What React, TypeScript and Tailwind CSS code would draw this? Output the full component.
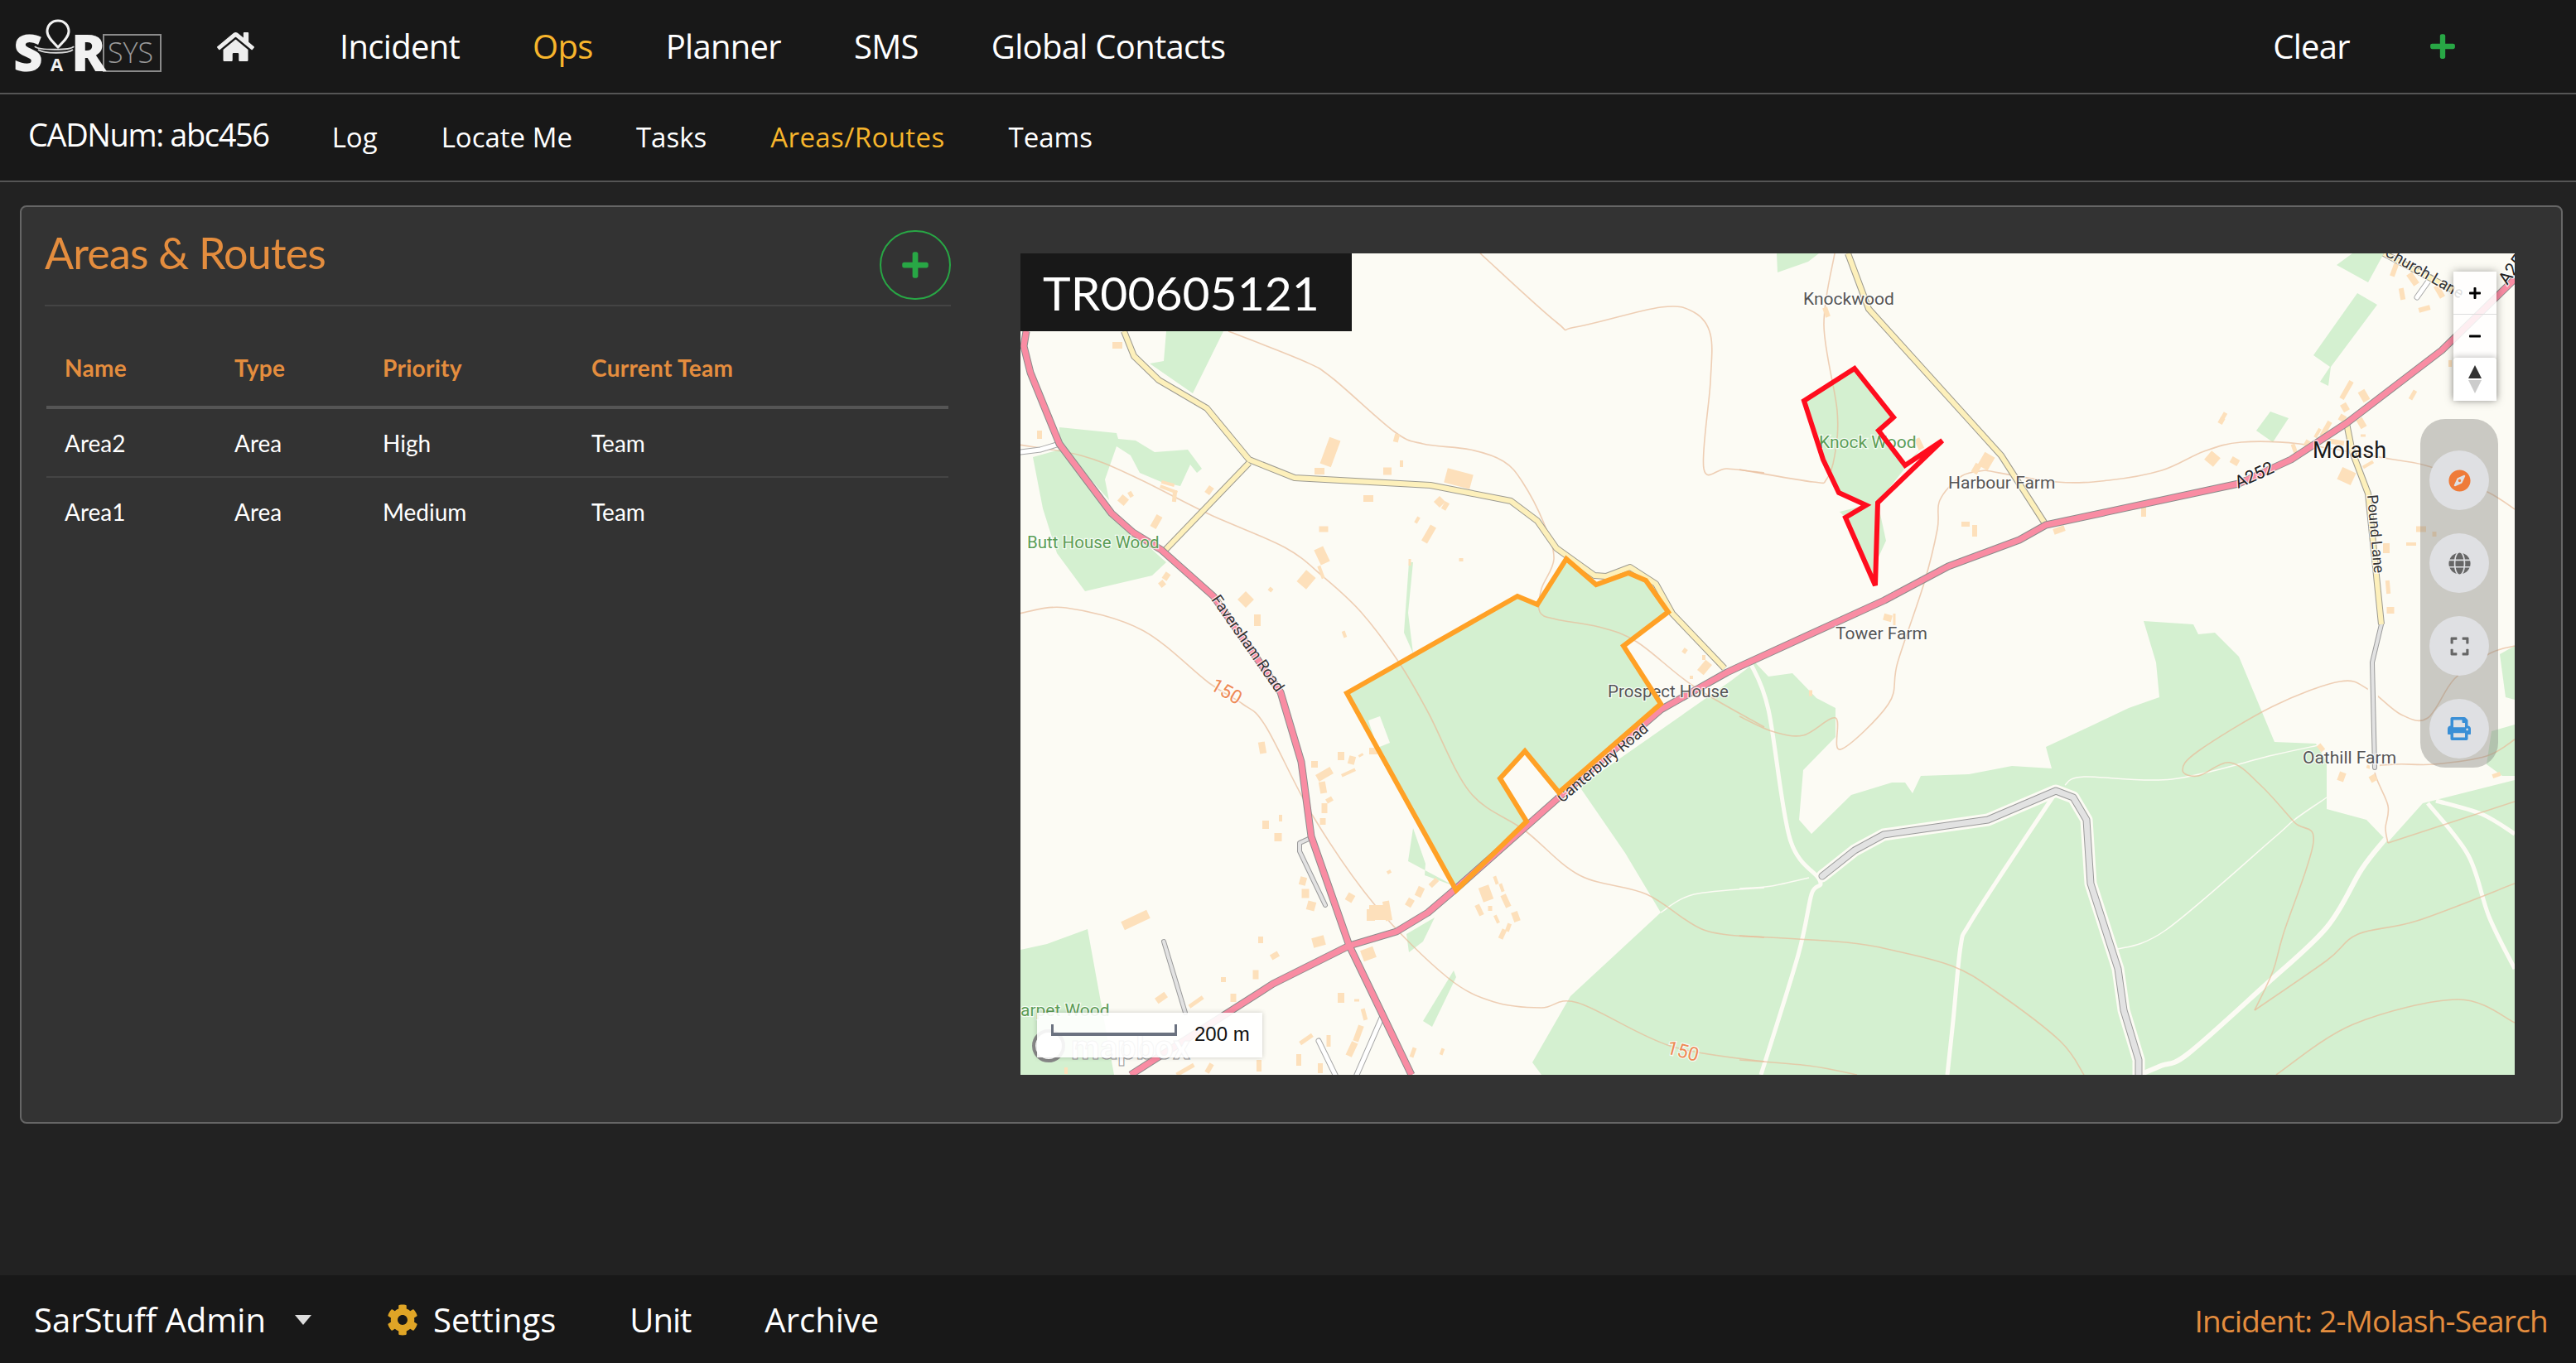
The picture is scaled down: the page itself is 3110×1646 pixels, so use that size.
import { FaCompass, FaCog, FaExpand, FaGlobe, FaHome, FaMinus, FaPlus, FaPrint } from 'react-icons/fa';

type Pt = [number, number];

// map drawing is in page pixels, so the svg viewBox starts where the map starts
const forests: number[][] = [
  [1279,516,1348,523,1350,530,1371,532,1394,546,1434,543,1451,566,1445,571,1437,561,1425,587,1402,582,1376,571,1365,550,1348,539,1334,579,1339,604,1279,536],
  [1247,552,1279,543,1342,620,1408,679,1391,695,1310,714,1276,668,1259,614],
  [1408,400,1477,400,1440,475,1388,439,1405,436],
  [2145,306,2196,306,2183,316,2146,329],
  [2840,306,2878,306,2859,341,2821,320],
  [2846,354,2870,368,2814,443,2811,466,2801,461,2813,443,2793,429],
  [2741,497,2763,505,2744,534,2724,520],
  [2119,800,2135,817,2164,813,2193,843,2216,855,2216,890,2177,930,2172,990,2187,1007,2235,960,2284,945,2300,945,2309,958,2319,937,2377,935,2429,925,2477,928,2470,902,2528,875,2570,855,2607,842,2603,800,2588,750,2648,754,2654,766,2674,764,2703,793,2746,896,2796,898,2809,920,2809,977,2857,990,2883,1017,2925,970,3036,942,3036,1298,1861,1298,1850,1283,1896,1203,2005,1102,1962,1030,1907,950,2090,822],
  [3018,790,3036,780,3036,845,3025,842],
  [3036,875,3008,883,3002,923,3021,937,3036,937],
  [1232,1147,1264,1140,1313,1122,1345,1298,1232,1298],
  [1706,1000,1721,1043,1720,1057,1756,1070,1700,1040],
  [1732,1108,1718,1137,1701,1150,1698,1128],
  [1755,1172,1758,1180,1729,1240,1718,1233],
  [1701,679,1706,679,1700,740,1706,789,1695,764],
  [2239,445,2286,504,2268,520,2300,562,2320,540,2267,607,2277,653,2265,679,2264,707,2228,625,2221,618,2253,610,2220,595,2201,555,2178,484],
];

const orangeArea = [1626,837,1832,720,1856,730,1891,675,1927,706,1966,692,1987,701,2014,739,1960,780,2005,850,1882,957,1841,907,1811,940,1843,992,1758,1075];
const redArea = [2239,445,2286,504,2268,520,2300,562,2345,532,2267,607,2264,707,2228,625,2253,610,2220,595,2201,555,2178,484];

const tracks: [number, number[]][] = [
  [5, [2113,800,2135,857,2161,1013,2197,1063,2187,1080,2171,1153,2126,1298]],
  [5, [2480,960,2422,1047,2377,1117,2367,1143,2358,1233,2351,1298]],
  [6, [2880,1013,2851,1050,2809,1120,2731,1193,2641,1273,2609,1287,2583,1298]],
  [5, [2931,970,2980,1033,3005,1107,3036,1170]],
  [5, [2941,967,2996,983,3036,1007]],
  [1.5, [2493,948,2516,938,2622,941,2744,912,2799,900]],
  [1.5, [2809,963,2770,990,2744,1013,2615,1123,2554,1147]],
  [1.5, [2100,1073,2139,1070,2184,1060]],
  [1.5, [2005,1102,2045,1080,2130,1072]],
];

const contours: number[][] = [
  [1787,306,1879,389,1902,395,2005,371,2045,377,2065,404,2065,461,2057,566,2085,566,2130,571],
  [1483,400,1574,436,1609,457,1683,521,1718,536,1775,543,1815,557,1838,582,1864,632,1876,675,1861,711,1859,739,1879,748,1930,757,1976,775,2045,829,2130,878],
  [1230,537,1305,550,1368,575,1460,621,1551,661,1597,696,1643,739,1689,800,1724,860,1775,957,1841,1003,1907,1057,1988,1080,2057,1123,2130,1132],
  [1230,741,1287,734,1379,761,1460,825,1500,850,1528,877,1586,987,1660,1093,1747,1180,1804,1210,1861,1217,1905,1211,2016,1263,2130,1282],
  [2215,306,2202,393,2218,496,2215,550,2205,579,2189,582,2100,567],
  [2397,568,2368,575,2342,604,2339,639,2323,704,2291,800,2280,850,2222,905,2216,867,2177,888,2139,883,2100,865],
  [2397,568,2483,582,2546,580,2610,568,2661,545,2706,534,2776,536,2884,554,2935,564,3003,594,3036,615],
  [2748,1298,2841,1237,2967,1207,3036,1235],
  [2100,1130,2229,1138,2287,1148,2358,1167,2409,1197,2487,1257,2516,1298],
  [2100,1280,2184,1287,2242,1298],
  [2722,1220,2744,1173,2757,1127,2793,1017,2770,993,2731,950,2693,921,2654,937,2635,930,2654,907,2744,853,2825,823,2860,833,2899,863,2931,867,2963,820,3006,789,3036,780],
  [2722,1220,2809,1160,2847,1128,2918,1112,3036,1067],
  [2883,1018,3036,968],
  [2883,1018,2880,1000,2883,973,2867,930,2893,923,2938,923,3002,913,3036,893],
];

// x, y, w, h, rotation
const buildings: number[][] = [
  [1349,417,12,8,0],[1255,525,6,10,0],[1606,546,14,34,20],[1593,569,12,8,0],[1675,569,10,9,0],[1692,560,4,8,0],
  [1686,529,6,10,15],[1761,578,32,18,15],[1652,602,12,8,0],[1738,606,10,10,45],[1745,611,6,10,30],[1711,628,4,8,30],
  [1725,645,8,22,30],[1598,639,11,7,0],[1596,671,12,20,-25],[1595,691,4,16,-20],[1577,700,15,18,40],[1504,724,14,14,45],
  [1534,712,5,5,40],[1518,749,8,14,0],[1623,766,4,8,-20],[1460,592,7,10,35],[1356,604,10,10,40],[1365,597,5,7,-30],
  [1396,630,8,16,30],[1410,584,16,4,15],[1411,591,22,4,20],[1418,599,5,14,5],[1408,696,7,9,35],[1403,705,7,7,-40],
  [1764,676,5,4,0],[1702,679,3,8,0],[2034,786,5,6,35],[2057,794,4,6,0],[2058,806,10,16,40],[2042,818,4,4,0],
  [1524,903,8,14,-10],[1587,923,8,8,0],[1619,913,8,10,0],[1632,918,8,10,15],[1658,907,10,8,0],[1643,912,6,3,-30],
  [1599,935,20,9,-30],[1628,933,18,4,-25],[1597,951,8,14,-10],[1605,966,8,6,-30],[1599,976,7,12,0],[1597,992,7,8,0],
  [1528,996,8,10,0],[1546,988,4,8,0],[1543,1011,9,10,0],[1573,1064,8,10,15],[1576,1079,9,11,0],[1583,1094,10,11,15],
  [1630,1084,9,10,30],[1677,1053,5,4,-30],[1714,1077,8,12,25],[1731,1066,12,6,-45],[1702,1090,8,10,30],[1663,1102,20,18,0],
  [1655,1105,10,14,0],[1675,1100,8,24,-10],[1371,1111,34,11,-25],[1794,1079,13,18,-20],[1806,1063,4,10,-20],[1813,1072,4,10,-20],
  [1818,1088,7,16,-25],[1786,1099,6,14,-25],[1799,1097,5,6,0],[1807,1110,4,10,-25],[1830,1107,8,12,-20],[1821,1120,5,10,20],
  [1814,1128,6,12,25],[1522,1135,6,8,0],[1592,1137,15,12,-15],[1652,1152,16,14,-20],[1539,1154,10,7,-30],[1516,1177,7,11,0],
  [1477,1183,6,6,0],[1402,1205,14,8,-35],[1444,1210,20,5,-35],[1489,1205,7,10,0],[1619,1205,8,12,0],[1638,1208,6,3,0],
  [1647,1225,5,14,-15],[1640,1248,7,20,20],[1632,1267,8,18,25],[1577,1255,18,5,-35],[1604,1257,5,14,0],[1706,1271,5,12,20],
  [1741,1270,4,8,20],[1568,1280,6,14,0],[1520,1287,6,14,0],[1460,1290,6,12,30],[1431,1292,5,24,60],[1594,1290,6,12,0],[1287,1293,4,8,0],
  [2205,377,6,12,-20],[2317,536,7,14,-25],[2398,557,14,18,30],[2386,566,8,12,30],[2373,633,10,6,0],[2384,641,6,14,0],
  [2486,640,14,7,-20],[2588,618,6,12,0],[2279,746,10,8,15],[2287,748,3,14,0],[2186,837,4,7,0],[2671,554,14,14,40],
  [2698,557,10,8,30],[2685,502,5,8,30],[2682,508,6,8,30],[2770,542,5,12,-20],[2786,536,8,8,30],[2808,518,6,20,30],
  [2798,523,4,12,30],[2833,471,6,24,30],[2854,478,9,14,-30],[2831,492,8,10,-30],[2828,505,8,8,30],[2851,511,8,12,-30],
  [2853,526,6,3,0],[2913,477,5,12,30],[2859,561,4,14,60],[2833,575,18,16,25],[2821,534,18,6,10],[2900,355,6,14,-10],
  [2927,373,14,6,-15],[2891,325,6,18,20],[2913,337,8,16,-35],[2945,352,7,16,-30],[2958,439,4,8,0],[2923,639,12,7,0],
  [2939,645,5,6,0],[2911,657,12,4,0],[2881,662,8,12,0],[2883,709,5,16,-5],[2886,737,9,8,0],
  [2802,903,6,9,-40],[2827,938,8,11,20],[2865,940,8,8,-30],[2862,927,10,4,20],[3014,936,10,5,-20],
];

const pinkRoads: number[][] = [
  [1365,1298,1537,1188,1629,1142,1686,1125,1724,1102,1758,1073,1882,963,2005,857,2085,812,2100,805,2275,725,2352,684,2438,652,2470,634,2703,584,2766,555,2833,511,2948,423,3036,337],
  [1239,400,1236,418,1244,450,1279,536,1342,620,1368,643,1402,664,1465,720,1546,836,1571,920,1583,1010,1629,1142,1669,1225,1704,1298],
];

const yellowRoads: number[][] = [
  [1357,400,1369,430,1399,459,1457,493,1508,555,1563,577,1727,586,1824,605,1856,629,1879,662,1925,695,1939,696,1968,685,1999,705,2019,741,2082,807],
  [1508,559,1405,666],
  [2231,306,2256,373,2416,550,2470,634],
  [2833,511,2840,546,2859,596,2875,754],
  [2878,306,2961,350],
];

const grayRoads: [number, number[]][] = [
  [9, [2200,1058,2239,1027,2274,1008,2400,990,2482,955,2503,963,2519,990,2524,1067,2557,1170,2564,1220,2582,1280,2582,1298]],
  [6, [2875,754,2864,800,2867,927]],
  [6, [1580,1013,1569,1018,1569,1028,1600,1093]],
  [6, [1405,1137,1431,1223]],
];

const whiteRoads: number[][] = [
  [1232,546,1256,543,1279,536],
  [1669,1227,1638,1298],
  [1592,1257,1612,1298],
  [2935,335,2918,359],
];

const labels: { t: string; x: number; y: number; s?: number; c?: string; r?: number }[] = [
  { t: 'Knockwood', x: 2177, y: 368 },
  { t: 'Knock Wood', x: 2196, y: 541, c: '#5b9d55' },
  { t: 'Harbour Farm', x: 2352, y: 590 },
  { t: 'Tower Farm', x: 2216, y: 772 },
  { t: 'Molash', x: 2792, y: 553, s: 27, c: '#1a1a1a' },
  { t: 'Prospect House', x: 1941, y: 842, s: 20.5 },
  { t: 'Oathill Farm', x: 2780, y: 922 },
  { t: 'Butt House Wood', x: 1240, y: 662, s: 20.5, c: '#5b9d55' },
  { t: 'arpet Wood', x: 1232, y: 1227, c: '#5b9d55' },
  { t: 'A252', x: 2702, y: 590, c: '#222', r: -24 },
  { t: 'A252', x: 3027, y: 345, c: '#222', r: -55 },
  { t: 'Pound Lane', x: 2858, y: 598, s: 18, c: '#333', r: 85 },
  { t: 'Church Lane', x: 2878, y: 308, s: 19, c: '#333', r: 30 },
  { t: 'Faversham Road', x: 1462, y: 724, s: 18.5, c: '#333', r: 55 },
  { t: 'Canterbury Road', x: 1886, y: 970, s: 18.5, c: '#333', r: -40 },
  { t: '150', x: 1460, y: 832, c: '#ee8a55', r: 30, s: 23 },
  { t: '150', x: 2011, y: 1272, c: '#ee8a55', r: 15, s: 23 },
];

const toPts = (a: number[]): Pt[] => {
  const out: Pt[] = [];
  for (let i = 0; i < a.length; i += 2) out.push([a[i], a[i + 1]]);
  return out;
};

const line = (a: number[]) => 'M' + toPts(a).map((p) => p.join(' ')).join('L');

// contour lines are curved, run a catmull-rom through the points
const smooth = (a: number[]) => {
  const p = toPts(a);
  let d = `M${p[0][0]} ${p[0][1]}`;
  for (let i = 0; i < p.length - 1; i++) {
    const p0 = p[i - 1] || p[i];
    const p1 = p[i];
    const p2 = p[i + 1];
    const p3 = p[i + 2] || p2;
    d += `C${p1[0] + (p2[0] - p0[0]) / 6} ${p1[1] + (p2[1] - p0[1]) / 6} ${p2[0] - (p3[0] - p1[0]) / 6} ${p2[1] - (p3[1] - p1[1]) / 6} ${p2[0]} ${p2[1]}`;
  }
  return d;
};

function MapDrawing() {
  return (
    <svg viewBox="1232 306 1804 992" className="block w-full h-full" fill="none">
      <rect x="1232" y="306" width="1804" height="992" fill="#fcfbf4" />
      {forests.map((f, i) => (
        <polygon key={i} points={f.join(' ')} fill="#d4f0d0" />
      ))}
      <polygon points={orangeArea.join(' ')} fill="#d4f0d0" />
      <polygon points="1652,870 1666,865 1678,897 1663,903" fill="#fcfbf4" />
      {tracks.map(([w, t], i) => (
        <path key={i} d={smooth(t)} stroke="#fcfbf4" strokeWidth={w} />
      ))}
      {contours.map((c, i) => (
        <path key={i} d={smooth(c)} stroke="#e8bb98" strokeOpacity="0.7" strokeWidth="1.6" />
      ))}
      {buildings.map(([x, y, w, h, r], i) => (
        <rect key={i} x={x - w / 2} y={y - h / 2} width={w} height={h} fill="#fde0bb" transform={`rotate(${r} ${x} ${y})`} />
      ))}
      {whiteRoads.map((r, i) => (
        <g key={i}>
          <path d={line(r)} stroke="#a8a8a8" strokeWidth="7" strokeLinecap="round" />
          <path d={line(r)} stroke="#ffffff" strokeWidth="5" strokeLinecap="round" />
        </g>
      ))}
      {grayRoads.map(([w, r], i) => (
        <g key={i} strokeLinecap="round" strokeLinejoin="round">
          <path d={line(r)} stroke="#fcfbf4" strokeWidth={w + 6} />
          <path d={line(r)} stroke="#9a9a9a" strokeWidth={w} />
          <path d={line(r)} stroke="#e2e2e2" strokeWidth={w - 2} />
        </g>
      ))}
      {yellowRoads.map((r, i) => (
        <g key={i} strokeLinejoin="round">
          <path d={line(r)} stroke="#9c9a90" strokeWidth="8" />
          <path d={line(r)} stroke="#fdf0bb" strokeWidth="6" />
        </g>
      ))}
      {pinkRoads.map((r, i) => (
        <path key={i} d={line(r)} stroke="#8c8c8c" strokeWidth="9" strokeLinejoin="round" />
      ))}
      {pinkRoads.map((r, i) => (
        <path key={i} d={line(r)} stroke="#f98ca3" strokeWidth="7" strokeLinejoin="round" />
      ))}
      <circle cx="1266" cy="1263" r="18" fill="#ffffff" stroke="#888888" strokeWidth="4" />
      <text x="1293" y="1279" fontSize="40" fontWeight="700" fontFamily="Roboto, sans-serif" fill="#ffffff" stroke="#999999" strokeWidth="1">
        mapbox
      </text>
      {labels.map((l, i) => (
        <text
          key={i}
          x={l.x}
          y={l.y}
          fontSize={l.s || 21}
          fontFamily="Roboto, sans-serif"
          fill={l.c || '#555555'}
          stroke="#ffffff"
          strokeOpacity="0.75"
          strokeWidth="2.5"
          paintOrder="stroke"
          transform={l.r ? `rotate(${l.r} ${l.x} ${l.y})` : undefined}
        >
          {l.t}
        </text>
      ))}
      <polygon points={orangeArea.join(' ')} stroke="#ffa126" strokeWidth="6" strokeLinejoin="miter" />
      <polygon points={redArea.join(' ')} stroke="#ff0d1e" strokeWidth="6" strokeLinejoin="miter" />
    </svg>
  );
}

function Logo() {
  return (
    <svg width="190" height="90" viewBox="10 11 190 90" className="shrink-0">
      <rect x="125" y="42" width="69" height="44" fill="none" stroke="#8a8a8a" strokeWidth="2" />
      <text x="130" y="76" fontSize="34" fontFamily="'Open Sans', sans-serif" fontWeight="300" fill="#9a9a9a">SYS</text>
      <text x="16" y="86" fontSize="62" fontFamily="'Open Sans', sans-serif" fontWeight="800" fill="#f2f2f2">S</text>
      <text x="86" y="86" fontSize="62" fontFamily="'Open Sans', sans-serif" fontWeight="800" fill="#f2f2f2">R</text>
      <text x="61" y="86" fontSize="22" fontFamily="'Open Sans', sans-serif" fontWeight="700" fill="#f2f2f2">A</text>
      <path d="M42 56c4 5 44 5 47 0" fill="none" stroke="#d8d8d8" strokeWidth="2" />
      <path d="M46 60c8 5 36 5 42 0" fill="none" stroke="#d8d8d8" strokeWidth="2" />
      <path d="M70 25c-8 0-13 6-13 13 0 7 8 14 13 19 5-5 13-12 13-19 0-7-5-13-13-13z" fill="#181818" stroke="#f2f2f2" strokeWidth="3" />
    </svg>
  );
}

function ToolButton({ children }: { children: React.ReactNode }) {
  return <div className="w-[72px] h-[72px] rounded-full bg-[#dfe0e3] flex items-center justify-center">{children}</div>;
}

export default function App() {
  const nav = "font-['Open_Sans',sans-serif] text-[40px] tracking-[-0.7px] leading-none text-white";

  return (
    <div className="h-screen overflow-hidden flex flex-col bg-[#222222]">
      <div className="h-[114px] shrink-0 bg-[#181818] border-b-2 border-[#555555] flex items-center">
        <div className="ml-[10px]">
          <Logo />
        </div>
        <FaHome className="ml-[62px] text-[#eeeeee]" size={45} />
        <div className={`ml-[103px] flex items-center gap-[88px] ${nav}`}>
          <span>Incident</span>
          <span className="text-[#f7b52c]">Ops</span>
          <span>Planner</span>
          <span>SMS</span>
          <span>Global Contacts</span>
        </div>
        <span className={`ml-auto ${nav}`}>Clear</span>
        <FaPlus className="ml-[95px] mr-[144px] text-[#28a745]" size={34} />
      </div>

      <div className="h-[106px] shrink-0 bg-[#181818] border-b-2 border-[#555555] flex items-center">
        <span className="ml-[34px] -mt-[8px] font-['Open_Sans',sans-serif] text-[38px] tracking-[-1.4px] leading-none text-white">CADNum: abc456</span>
        <div className="ml-[76px] -mt-[1px] flex items-center gap-[77px] font-['Open_Sans',sans-serif] text-[33px] leading-none text-white">
          <span>Log</span>
          <span>Locate Me</span>
          <span>Tasks</span>
          <span className="text-[#f7b52c] tracking-[0.4px]">Areas/Routes</span>
          <span>Teams</span>
        </div>
      </div>

      <div className="flex-1 min-h-0 pt-[28px] pl-[24px] pr-[16px]">
        <div className="h-[1109px] rounded-[8px] border-2 border-[#666666] bg-[#333333] pt-[28px] pl-[28px] flex items-start font-['Lato',sans-serif]">
          <div className="w-[1094px] shrink-0">
            <div className="h-[92px] border-b-2 border-[#444444] flex items-start justify-between">
              <h1 className="-mt-[4px] text-[52px] tracking-[-0.8px] leading-[62px] text-[#e48d3e]">Areas &amp; Routes</h1>
              <div className="w-[86px] h-[84px] rounded-full border-2 border-[#28a745] flex items-center justify-center">
                <FaPlus className="text-[#28a745]" size={36} />
              </div>
            </div>
            <table className="mt-[28px] ml-[2px] w-[1089px] text-[28px] table-fixed">
              <thead>
                <tr className="h-[94px] border-b-4 border-[#555555] text-left text-[#e48d3e]">
                  <th className="w-[227px] pl-[22px] font-bold tracking-[0.3px]">Name</th>
                  <th className="w-[179px] font-bold tracking-[0.3px]">Type</th>
                  <th className="w-[252px] font-bold tracking-[0.3px]">Priority</th>
                  <th className="font-bold tracking-[0.3px]">Current Team</th>
                </tr>
              </thead>
              <tbody className="text-white">
                <tr className="h-[84px] border-b-2 border-[#444444]">
                  <td className="pl-[22px]">Area2</td>
                  <td>Area</td>
                  <td>High</td>
                  <td>Team</td>
                </tr>
                <tr className="h-[83px]">
                  <td className="pl-[22px]">Area1</td>
                  <td>Area</td>
                  <td>Medium</td>
                  <td>Team</td>
                </tr>
              </tbody>
            </table>
          </div>

          <div className="relative mt-[28px] ml-[84px] w-[1804px] h-[992px] shrink-0 overflow-hidden">
            <MapDrawing />

            <div className="absolute left-0 top-0 w-[400px] h-[94px] bg-[#181818] flex items-center pl-[27px] text-[57px] leading-none text-white">
              TR00605121
            </div>

            <div className="absolute left-[1730px] top-[22px] w-[52px] shadow-[0_0_10px_rgba(0,0,0,0.35)]">
              <div className="h-[52px] bg-white/85 border-b border-[#dddddd] flex items-center justify-center text-black">
                <FaPlus size={16} />
              </div>
              <div className="h-[52px] bg-white/85 flex items-center justify-center text-black">
                <FaMinus size={16} />
              </div>
              <div className="h-[52px] bg-white/95 rounded-t-[4px] shadow-[0_-2px_6px_rgba(0,0,0,0.2)] flex flex-col items-center justify-center gap-[2px]">
                <div className="w-0 h-0 border-x-[8px] border-x-transparent border-b-[16px] border-b-[#333333]" />
                <div className="w-0 h-0 border-x-[8px] border-x-transparent border-t-[16px] border-t-[#cccccc]" />
              </div>
            </div>

            <div className="absolute left-[1690px] top-[200px] w-[94px] h-[421px] rounded-[30px] bg-[#80807a]/40 pt-[38px] flex flex-col items-center gap-[28px]">
              <ToolButton>
                <FaCompass size={27} className="text-[#ef7b39]" />
              </ToolButton>
              <ToolButton>
                <FaGlobe size={27} className="text-[#666666]" />
              </ToolButton>
              <ToolButton>
                <FaExpand size={25} className="text-[#666666]" />
              </ToolButton>
              <ToolButton>
                <FaPrint size={28} className="text-[#3a8fd6]" />
              </ToolButton>
            </div>

            <div className="absolute left-[20px] top-[917px] w-[272px] h-[54px] bg-white/90 shadow-[0_0_6px_rgba(0,0,0,0.2)] flex items-center pl-[17px]">
              <div className="w-[152px] h-[14px] -mt-[12px] border-x-[3px] border-b-[4px] border-[#6b7280]" />
              <span className="ml-[21px] -mt-[2px] font-['Liberation_Sans',sans-serif] text-[24px] leading-none text-[#111111]">200 m</span>
            </div>
          </div>
        </div>
      </div>

      <div className="h-[106px] shrink-0 pt-[2px] bg-[#181818] flex items-center font-['Open_Sans',sans-serif] text-[40px] leading-none text-white">
        <span className="ml-[41px]">SarStuff Admin</span>
        <div className="ml-[35px] w-0 h-0 border-x-[10px] border-x-transparent border-t-[12px] border-t-[#dddddd]" />
        <FaCog className="ml-[91px] text-[#e0a526]" size={38} />
        <span className="ml-[18px]">Settings</span>
        <span className="ml-[89px] tracking-[-1px]">Unit</span>
        <span className="ml-[89px]">Archive</span>
        <span className="ml-auto mr-[34px] text-[37px] tracking-[-0.8px] text-[#e48d3e]">Incident: 2-Molash-Search</span>
      </div>
    </div>
  );
}
